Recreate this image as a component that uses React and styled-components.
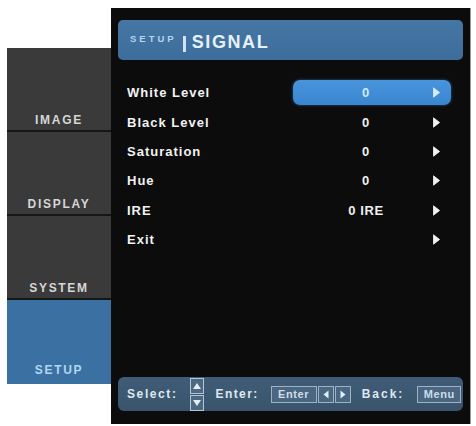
import React from 'react'
import styled, { createGlobalStyle } from 'styled-components'

const GlobalStyle = createGlobalStyle`
  html, body {
    margin: 0;
    padding: 0;
    background: #fff;
  }
  body {
    width: 476px;
    height: 426px;
    overflow: hidden;
    font-family: "Liberation Sans", Arial, sans-serif;
  }
`

const Screen = styled.div`
  display: flex;
  align-items: flex-start;
  padding-left: 7px;
  height: 426px;
  box-sizing: border-box;
`

const Sidebar = styled.nav`
  margin-top: 48px;
  width: 104px;
  display: flex;
  flex-direction: column;
`

const Tab = styled.div`
  height: 84px;
  box-sizing: border-box;
  display: flex;
  align-items: flex-end;
  justify-content: center;
  padding-bottom: ${p => (p.last ? 7 : 3)}px;
  background: ${p => (p.active ? '#3a71a2' : '#3a3a3b')};
  border-bottom: ${p => (p.last ? 'none' : '2px solid #161616')};
  color: ${p => (p.active ? '#b2d6f1' : '#d6d6d6')};
  font-size: 12px;
  font-weight: bold;
  letter-spacing: 1.7px;
  line-height: 14px;
`

const Panel = styled.main`
  margin-top: 8px;
  width: 359px;
  height: 416px;
  box-sizing: border-box;
  padding: 12px 7px 13px 7px;
  background: #0c0c0d;
  box-shadow: 1px 0 0 #9a9a9a;
  display: flex;
  flex-direction: column;
`

const Header = styled.header`
  height: 40px;
  flex-shrink: 0;
  border-radius: 5px;
  background: linear-gradient(#4677a4, #3d6d9a);
  display: flex;
  align-items: center;
  padding: 5px 0 0 12px;
  box-sizing: border-box;
  gap: 6px;
`

/* small superscript-style section name before the divider */
const Section = styled.span`
  align-self: flex-start;
  margin-top: 8px;
  font-size: 9.5px;
  font-weight: bold;
  letter-spacing: 3px;
  color: #b7d3ec;
`

const Divider = styled.span`
  width: 3px;
  height: 16px;
  background: #cfe3f4;
  margin-top: 2px;
`

const Title = styled.h1`
  margin: 0;
  font-size: 18px;
  font-weight: bold;
  letter-spacing: 1.6px;
  color: #e6f0f9;
`

const List = styled.div`
  margin-top: 18px;
  display: flex;
  flex-direction: column;
`

const Row = styled.div`
  height: 29.4px;
  display: grid;
  grid-template-columns: 1fr 158px;
  align-items: center;
  padding: 0 12px 0 9px;
`

const Label = styled.span`
  color: #f2f2f2;
  font-size: 13px;
  font-weight: bold;
  letter-spacing: 1px;
`

const ValueCell = styled.div`
  height: 25px;
  display: grid;
  grid-template-columns: 1fr 7px;
  align-items: center;
  padding: 0 11px 0 6px;
  border-radius: 7px;
  background: ${p => (p.selected ? 'linear-gradient(#4895dc, #3a85cf)' : 'transparent')};
  box-shadow: ${p => (p.selected ? '0 0 3px rgba(70, 140, 210, 0.6)' : 'none')};
  color: ${p => (p.selected ? '#d2e8fb' : '#f0f0f0')};
`

const Value = styled.span`
  text-align: center;
  font-size: 13px;
  font-weight: bold;
  letter-spacing: 0.6px;
`

const Arrow = ({ color }) => (
  <svg width="7" height="11" viewBox="0 0 7 11">
    <path d="M0.5 0.8 L6.6 5.5 L0.5 10.2 Z" fill={color} strokeLinejoin="round" stroke={color} strokeWidth="0.8" />
  </svg>
)

const Footer = styled.footer`
  margin-top: auto;
  height: 34px;
  border-radius: 6px;
  background: linear-gradient(#405c76, #3a546d);
  display: flex;
  align-items: center;
  padding-left: 9px;
  color: #dfe8f0;
`

const Hint = styled.span`
  font-size: 12px;
  font-weight: bold;
  letter-spacing: ${p => p.spacing || 1.4}px;
  margin-left: ${p => p.gap || 0}px;
`

const KeyIcon = styled.span`
  display: flex;
  margin-left: ${p => p.gap || 0}px;
`

const Key = styled.span`
  margin-left: ${p => p.gap || 0}px;
  height: 17px;
  min-width: ${p => p.width || 0}px;
  box-sizing: border-box;
  border: 1px solid #9db2c4;
  background: #4a6681;
  color: #cfdde9;
  font-size: 11px;
  font-weight: bold;
  letter-spacing: 0.6px;
  display: flex;
  align-items: center;
  justify-content: center;
  padding: 0 2px;
`

const UpDown = () => (
  <svg width="14" height="33" viewBox="0 0 14 33">
    <rect x="0.5" y="0.5" width="13" height="15" fill="#4c6883" stroke="#b4c6d4" />
    <rect x="0.5" y="17.5" width="13" height="15" fill="#4c6883" stroke="#b4c6d4" />
    <path d="M3 11 L7 5 L11 11 Z" fill="#e4edf4" />
    <path d="M3 22 L7 28 L11 22 Z" fill="#e4edf4" />
  </svg>
)

const Tri = ({ dir }) => (
  <svg width="6" height="9" viewBox="0 0 6 9">
    <path d={dir === 'left' ? 'M5.5 0.5 L0.5 4.5 L5.5 8.5 Z' : 'M0.5 0.5 L5.5 4.5 L0.5 8.5 Z'} fill="#e4edf4" />
  </svg>
)

const tabs = [
  { name: 'IMAGE' },
  { name: 'DISPLAY' },
  { name: 'SYSTEM' },
  { name: 'SETUP', active: true }
]

const items = [
  { label: 'White Level', value: '0' },
  { label: 'Black Level', value: '0' },
  { label: 'Saturation', value: '0' },
  { label: 'Hue', value: '0' },
  { label: 'IRE', value: '0 IRE' },
  { label: 'Exit', value: '' }
]

const App = () => {
  const selected = 0

  return (
    <>
      <GlobalStyle />
      <Screen>
        <Sidebar>
          {tabs.map((t, i) => (
            <Tab key={t.name} active={t.active} last={i === tabs.length - 1}>
              {t.name}
            </Tab>
          ))}
        </Sidebar>
        <Panel>
          <Header>
            <Section>SETUP</Section>
            <Divider />
            <Title>SIGNAL</Title>
          </Header>
          <List>
            {items.map((item, i) => (
              <Row key={item.label}>
                <Label>{item.label}</Label>
                <ValueCell selected={i === selected}>
                  <Value>{item.value}</Value>
                  <Arrow color={i === selected ? '#d6ebff' : '#f2f2f2'} />
                </ValueCell>
              </Row>
            ))}
          </List>
          <Footer>
            <Hint spacing={1.6}>Select:</Hint>
            <KeyIcon gap={12}><UpDown /></KeyIcon>
            <Hint gap={12} spacing={1.4}>Enter:</Hint>
            <Key gap={12} width={46}>Enter</Key>
            <Key gap={1} width={16}><Tri dir="left" /></Key>
            <Key gap={1} width={16}><Tri dir="right" /></Key>
            <Hint gap={11} spacing={2}>Back:</Hint>
            <Key gap={13} width={44}>Menu</Key>
          </Footer>
        </Panel>
      </Screen>
    </>
  )
}

export default App
